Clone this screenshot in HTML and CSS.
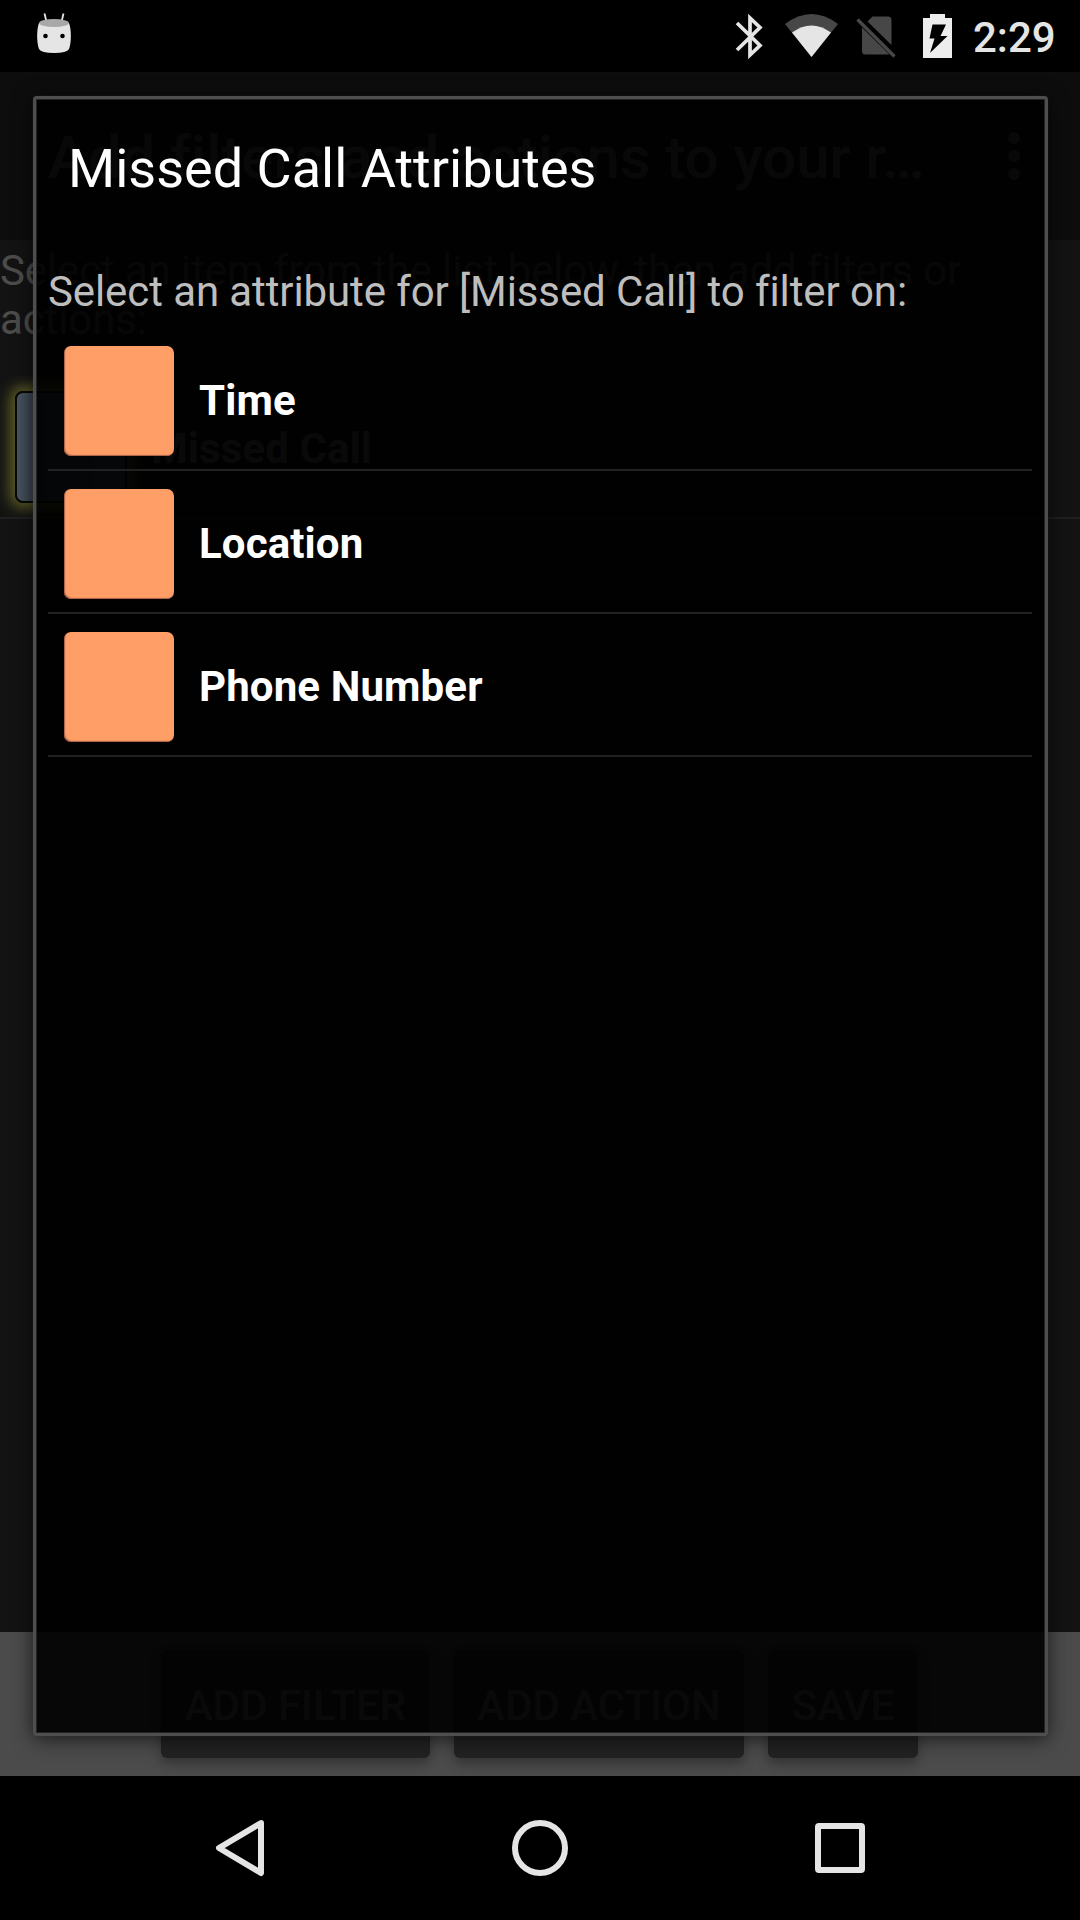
FILE: index.html
```html
<!DOCTYPE html>
<html lang="en">
<head>
<meta charset="utf-8">
<title>Missed Call Attributes</title>
<link rel="stylesheet" href="styles.css">
</head>
<body>
<div class="screen">
  <header class="status-bar">
    <svg class="notification" width="36" height="44" viewBox="0 0 36 44">
      <path d="M8.500 1.500L10.500 10M27.500 1.500L25.500 10" stroke="#e5e5e5" stroke-width="1.800" fill="none"/>
      <path d="M3 11C.5 18 .5 30 3 37Q5 41 18 41Q31 41 33 37C35.500 30 35.500 18 33 11Z" fill="#e5e5e5"/>
      <ellipse cx="18" cy="11" rx="15" ry="4" fill="#a8a8a8"/>
      <circle cx="9.500" cy="24" r="2.300"/><circle cx="26.500" cy="24" r="2.300"/>
    </svg>
    <svg class="indicators" width="220" height="72" viewBox="732 0 220 72">
      <path d="M737 23L760 45.500L750 55V18L760 27.500L737 50" fill="none" stroke="#e5e5e5" stroke-width="3.700"/>
      <path d="M785 24Q811.500 4 838 24L811.500 57Z" fill="#474747"/>
      <path d="M792 32.500Q811.500 18.500 831 32.500L811.500 57Z" fill="#e5e5e5"/>
      <path d="M872.500 16.500H888Q891.500 16.500 891.500 20V45L867.500 21.500ZM862 27.500L889.500 54.500H865.500Q862 54.500 862 51Z" fill="#474747"/>
      <path d="M857.500 19.500L894.500 56.500" stroke="#474747" stroke-width="3.300"/>
      <path d="M923 18H930V14H945V18H952V58H923Z" fill="#ededed"/>
      <path d="M932.500 24.500H946L940.500 36H947.500L930 53L934.500 38.500H929.500Z"/>
    </svg>
    <span class="clock">2:29</span>
  </header>

  <main class="app">
    <div class="app-bar">
      <h1 class="app-title">Add filters and actions to your r…</h1>
      <svg class="overflow" width="12" height="48" viewBox="0 0 12 48" fill="#5c5c5c">
        <circle cx="6" cy="6" r="6"/><circle cx="6" cy="24" r="6"/><circle cx="6" cy="42" r="6"/>
      </svg>
    </div>
    <p class="app-hint">Select an item from the list below, then add filters or actions:</p>
    <div class="event">
      <span class="event-icon"></span>
      <span class="event-name">Missed Call</span>
    </div>
    <div class="actions">
      <span class="button add-filter">ADD FILTER</span>
      <span class="button add-action">ADD ACTION</span>
      <span class="button save">SAVE</span>
    </div>
  </main>

  <nav class="nav-bar">
    <svg width="1080" height="144" viewBox="0 0 1080 144" fill="none" stroke="#e5e5e5" stroke-width="6" stroke-linejoin="round">
      <path d="M261 47L219 72L261 97Z"/>
      <circle cx="540" cy="72" r="25"/>
      <rect x="818" y="50" width="44" height="44" rx="1"/>
    </svg>
  </nav>

  <section class="dialog">
    <h2 class="dialog-title">Missed Call Attributes</h2>
    <p class="dialog-hint">Select an attribute for [Missed Call] to filter on:</p>
    <ul class="attributes">
      <li class="attribute"><span class="swatch"></span>Time</li>
      <li class="attribute"><span class="swatch"></span>Location</li>
      <li class="attribute"><span class="swatch"></span>Phone Number</li>
    </ul>
  </section>
</div>
</body>
</html>
```
FILE: styles.css
```css
* {
  box-sizing: border-box;
  margin: 0;
  padding: 0;
}

body {
  background: #000;
  font-family: Roboto, "Liberation Sans", sans-serif;
}

.screen {
  position: relative;
  display: flex;
  flex-direction: column;
  width: 1080px;
  height: 1920px;
  overflow: hidden;
}

.status-bar {
  display: flex;
  height: 72px;
  padding: 0 25px 0 36px;
  background: #000;
}

.notification {
  margin-top: 12px;
}

.indicators {
  margin-left: auto;
}

.clock {
  width: 82px;
  margin-left: 21px;
  font-size: 42px;
  font-weight: 500;
  line-height: 76px;
  color: #e5e5e5;
  white-space: nowrap;
}

.app {
  display: flex;
  flex: 1;
  flex-direction: column;
  background: #131313;
}

.app-bar {
  display: flex;
  align-items: center;
  justify-content: space-between;
  height: 168px;
  padding: 0 60px 0 48px;
  background: #0d0d0d;
}

.app-title {
  padding-top: 4px;
  font-size: 60px;
  font-weight: 500;
  line-height: 70px;
  letter-spacing: -0.1px;
  color: #5c5c5c;
  white-space: nowrap;
}

.app-hint {
  height: 136px;
  padding-top: 6px;
  font-size: 42px;
  line-height: 49px;
  letter-spacing: -0.12px;
  color: #4c4c4c;
}

.event {
  display: flex;
  align-items: center;
  gap: 24px;
  height: 143px;
  padding: 0 0 0 15px;
  overflow: hidden;
  border-bottom: 2px solid #202020;
}

.event-icon {
  width: 112px;
  height: 112px;
  border: 2px solid #080804;
  border-radius: 8px;
  background: linear-gradient(90deg, #4a5561, #353e4a 20%, #465260);
  box-shadow: 0 0 14px 5px #62622a;
}

.event-name {
  padding-top: 4px;
  font-size: 42px;
  font-weight: 700;
  line-height: 50px;
  letter-spacing: 0.1px;
  color: #666;
}

.actions {
  display: flex;
  gap: 24px;
  height: 144px;
  margin-top: auto;
  padding: 18px 0 18px 161px;
  background: #4b4b4b;
}

.button {
  height: 108px;
  border-radius: 6px;
  background: #222;
  box-shadow: 0 6px 12px rgba(0, 0, 0, 0.3);
  font-size: 42px;
  font-weight: 500;
  line-height: 112px;
  text-align: center;
  color: #666;
}

.add-filter {
  width: 269px;
}

.add-action {
  width: 290px;
}

.save {
  width: 150px;
}

.nav-bar {
  height: 144px;
  background: #000;
}

.nav-bar svg {
  display: block;
}

.dialog {
  position: absolute;
  top: 96px;
  left: 33px;
  width: 1015px;
  height: 1640px;
  padding: 0 12px;
  border: 3px solid #4e4e4e;
  border-radius: 4px;
  background: rgba(0, 0, 0, 0.91);
  background-clip: padding-box;
  box-shadow: 0 0 1px #3c3c3c, 0 3px 20px rgba(0, 0, 0, 0.65), inset 0 0 0 1px #242424;
}

.dialog-title {
  height: 161px;
  padding: 38px 0 0 20px;
  font-size: 54px;
  font-weight: 400;
  line-height: 64px;
  color: #fff;
  white-space: nowrap;
}

.dialog-hint {
  height: 68px;
  padding-top: 7px;
  font-size: 42px;
  line-height: 49px;
  letter-spacing: -0.1px;
  color: #bebebe;
  white-space: nowrap;
}

.attributes {
  list-style: none;
}

.attribute {
  display: flex;
  align-items: center;
  gap: 25px;
  width: 984px;
  height: 143px;
  padding: 4px 0 0 16px;
  border-bottom: 2px solid #222;
  font-size: 42px;
  font-weight: 700;
  line-height: 50px;
  letter-spacing: 0.12px;
  color: #fff;
}

.swatch {
  width: 110px;
  height: 110px;
  border-radius: 7px;
  background: #ff9e66;
  box-shadow: inset 1px -1px 1px rgba(130, 70, 60, 0.7);
}
```
